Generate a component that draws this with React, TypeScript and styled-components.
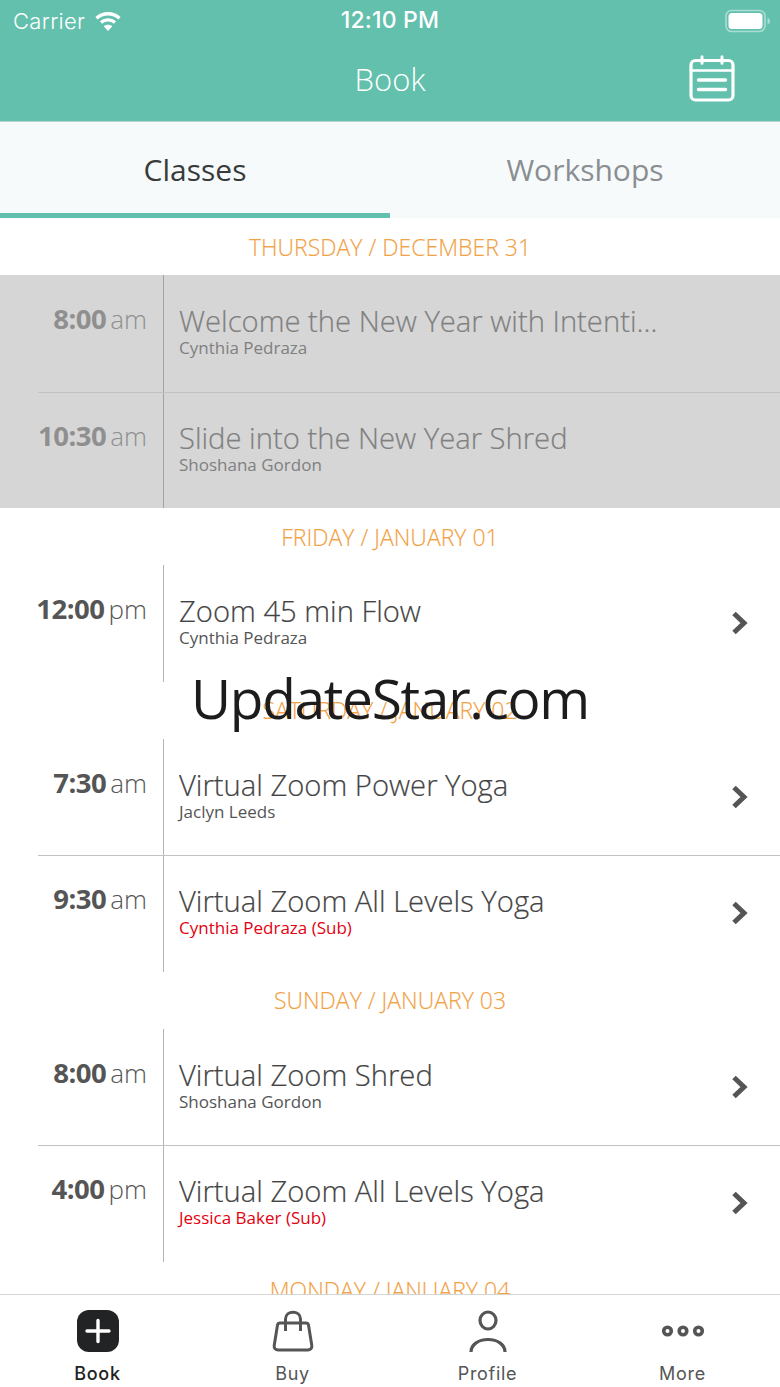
import React from 'react'
import styled, { createGlobalStyle } from 'styled-components'

const GlobalStyle = createGlobalStyle`
  html, body {
    margin: 0;
    padding: 0;
    background: #fff;
  }
  * {
    box-sizing: border-box;
  }
`

interface ClassItem {
  time: string
  period: string
  title: string
  teacher: string
  sub?: boolean
}
interface Section {
  heading: string
  past?: boolean
  items: ClassItem[]
}

const sections: Section[] = [
  {
    heading: 'THURSDAY / DECEMBER 31',
    past: true,
    items: [
      { time: '8:00', period: 'am', title: 'Welcome the New Year with Intentions and Flow', teacher: 'Cynthia Pedraza' },
      { time: '10:30', period: 'am', title: 'Slide into the New Year Shred', teacher: 'Shoshana Gordon' },
    ],
  },
  {
    heading: 'FRIDAY / JANUARY 01',
    items: [{ time: '12:00', period: 'pm', title: 'Zoom 45 min Flow', teacher: 'Cynthia Pedraza' }],
  },
  {
    heading: 'SATURDAY / JANUARY 02',
    items: [
      { time: '7:30', period: 'am', title: 'Virtual Zoom Power Yoga', teacher: 'Jaclyn Leeds' },
      { time: '9:30', period: 'am', title: 'Virtual Zoom All Levels Yoga', teacher: 'Cynthia Pedraza (Sub)', sub: true },
    ],
  },
  {
    heading: 'SUNDAY / JANUARY 03',
    items: [
      { time: '8:00', period: 'am', title: 'Virtual Zoom Shred', teacher: 'Shoshana Gordon' },
      { time: '4:00', period: 'pm', title: 'Virtual Zoom All Levels Yoga', teacher: 'Jessica Baker (Sub)', sub: true },
    ],
  },
  { heading: 'MONDAY / JANUARY 04', items: [] },
]

const WifiIcon = () => (
  <svg width="28" height="22" viewBox="0 0 28 22" fill="none" stroke="#fff" strokeWidth="3.4">
    <path d="M2.5 8.2C9 2.2 19 2.2 25.5 8.2" />
    <path d="M7 12.6c4-3.6 10-3.6 14 0" />
    <path d="M14 21l4.4-4.7c-2.5-2-6.3-2-8.8 0z" fill="#fff" stroke="none" />
  </svg>
)

const BatteryIcon = () => (
  <svg width="46" height="24" viewBox="0 0 46 24" fill="none">
    <rect x="1" y="1.5" width="39" height="21" rx="5.5" stroke="#fff" strokeOpacity="0.45" strokeWidth="1.6" />
    <rect x="3.5" y="4" width="34" height="16" rx="3.5" fill="#fff" />
    <path d="M42.5 8.5c1.5.5 2.5 2 2.5 3.5s-1 3-2.5 3.5z" fill="#fff" fillOpacity="0.45" />
  </svg>
)

const CalendarIcon = () => (
  <svg width="46" height="47" viewBox="0 0 46 47" fill="none" stroke="#fff" strokeLinecap="round">
    <rect x="2" y="5.5" width="42" height="39.5" rx="4.5" strokeWidth="3.2" />
    <path d="M2 15.5h42" strokeWidth="2.4" />
    <path d="M13 1.8v6.5M33 1.8v6.5" strokeWidth="3" />
    <path d="M9.5 25h27M9.5 34.5h27" strokeWidth="3.4" />
  </svg>
)

const ChevronIcon = () => (
  <svg width="18" height="24" viewBox="0 0 18 24" fill="none" stroke="#555" strokeWidth="5">
    <path d="M3 2.5l10 9.5-10 9.5" />
  </svg>
)

const BookIcon = () => (
  <svg width="42" height="42" viewBox="0 0 42 42">
    <rect width="42" height="42" rx="12" fill="#222325" />
    <path d="M21 10.5v21M10 21h22" stroke="#fff" strokeWidth="3.4" strokeLinecap="round" />
  </svg>
)

const BuyIcon = () => (
  <svg width="42" height="42" viewBox="0 0 42 42" fill="none" stroke="#555" strokeWidth="3">
    <path d="M8 13h26c1.5 0 2.2.8 2.5 2l3.3 20.5c.4 2.8-1.4 4.5-4 4.5H6.2c-2.6 0-4.4-1.7-4-4.5L5.5 15c.3-1.2 1-2 2.5-2z" />
    <path d="M13.5 21V9c0-9 15-9 15 0v12" />
  </svg>
)

const ProfileIcon = () => (
  <svg width="42" height="42" viewBox="0 0 42 42" fill="none" stroke="#555" strokeWidth="3.2">
    <ellipse cx="21" cy="10.5" rx="8" ry="8.5" />
    <path d="M4 42c0-7 7-12.5 17-12.5S38 35 38 42" />
  </svg>
)

const MoreIcon = () => (
  <svg width="44" height="14" viewBox="0 0 44 14" fill="none" stroke="#555" strokeWidth="3.6">
    <circle cx="6.5" cy="7" r="3.8" />
    <circle cx="22" cy="7" r="3.8" />
    <circle cx="37.5" cy="7" r="3.8" />
  </svg>
)

const App = () => {
  return (
    <Page>
      <GlobalStyle />
      <Header>
        <StatusBar>
          <Carrier>
            Carrier
            <WifiIcon />
          </Carrier>
          <Clock>12:10 PM</Clock>
          <Battery>
            <BatteryIcon />
          </Battery>
        </StatusBar>
        <NavBar>
          <NavTitle>Book</NavTitle>
          <CalendarButton>
            <CalendarIcon />
          </CalendarButton>
        </NavBar>
      </Header>
      <Tabs>
        <Tab $active>Classes</Tab>
        <Tab>Workshops</Tab>
      </Tabs>
      <Schedule>
        {sections.map((section) => (
          <div key={section.heading}>
            <DayHeading>{section.heading}</DayHeading>
            {section.items.map((item, index) => (
              <ClassRow key={item.time} $past={section.past}>
                <TimeCell $past={section.past}>
                  <b>{item.time}</b>
                  <span>{item.period}</span>
                </TimeCell>
                <Details $divided={index > 0}>
                  <ClassInfo>
                    <ClassTitle $past={section.past}>{item.title}</ClassTitle>
                    <Teacher $past={section.past} $sub={item.sub}>
                      {item.teacher}
                    </Teacher>
                  </ClassInfo>
                  {!section.past && (
                    <Chevron>
                      <ChevronIcon />
                    </Chevron>
                  )}
                </Details>
              </ClassRow>
            ))}
          </div>
        ))}
      </Schedule>
      <TabBar>
        <TabItem $active>
          <IconSlot>
            <BookIcon />
          </IconSlot>
          Book
        </TabItem>
        <TabItem>
          <IconSlot>
            <BuyIcon />
          </IconSlot>
          Buy
        </TabItem>
        <TabItem>
          <IconSlot>
            <ProfileIcon />
          </IconSlot>
          Profile
        </TabItem>
        <TabItem>
          <IconSlot>
            <MoreIcon />
          </IconSlot>
          More
        </TabItem>
      </TabBar>
      <Watermark>UpdateStar.com</Watermark>
    </Page>
  )
}

const Page = styled.div`
  position: relative;
  display: flex;
  flex-direction: column;
  width: 780px;
  height: 1387px;
  overflow: hidden;
  background: #fff;
  font-family: 'Open Sans', 'Liberation Sans', sans-serif;
`
const Header = styled.header`
  flex: none;
  height: 122px;
  background: #63c0ad;
  border-bottom: 1px solid #b9d4ce;
  color: #fff;
`
const StatusBar = styled.div`
  display: grid;
  grid-template-columns: 1fr auto 1fr;
  align-items: center;
  height: 40px;
  padding: 1px 9px 0 13px;
  font-family: 'Inter', 'Liberation Sans', sans-serif;
  font-size: 22px;
`
const Carrier = styled.div`
  display: flex;
  align-items: center;
  gap: 9px;
  font-weight: 300;
  letter-spacing: 0.3px;
`
const Clock = styled.div`
  margin: 0 4px 2px 0;
  font-size: 23px;
  font-weight: 500;
  letter-spacing: 0.2px;
`
const Battery = styled.div`
  display: flex;
  justify-content: flex-end;
`
const NavBar = styled.div`
  position: relative;
  display: flex;
  align-items: center;
  justify-content: center;
  height: 81px;
  padding-bottom: 4px;
`
const NavTitle = styled.div`
  font-size: 31px;
  font-weight: 300;
`
const CalendarButton = styled.div`
  position: absolute;
  right: 45px;
  top: 15px;
  display: flex;
`
const Tabs = styled.nav`
  flex: none;
  display: flex;
  height: 96px;
  background: #f6fafb;
`
const Tab = styled.div<{ $active?: boolean }>`
  flex: 1;
  display: flex;
  align-items: center;
  justify-content: center;
  padding-top: 4px;
  font-size: 30px;
  color: ${(props) => (props.$active ? '#3a3a3a' : '#8a8e92')};
  border-bottom: 5px solid ${(props) => (props.$active ? '#63c0ad' : 'transparent')};
`
const Schedule = styled.main`
  flex: 1;
  min-height: 0;
  overflow: hidden;
`
const DayHeading = styled.h2`
  display: flex;
  align-items: center;
  justify-content: center;
  height: 57px;
  margin: 0;
  font-size: 23px;
  font-weight: 300;
  -webkit-text-stroke: 0.15px currentColor;
  color: #f2a144;
`
const ClassRow = styled.div<{ $past?: boolean }>`
  display: flex;
  height: 116.5px;
  background: ${(props) => (props.$past ? '#d6d6d6' : '#fff')};
`
const TimeCell = styled.div<{ $past?: boolean }>`
  flex: none;
  display: flex;
  align-items: baseline;
  justify-content: flex-end;
  gap: 4px;
  width: 164px;
  padding: 25px 16px 0 0;
  border-right: 1px solid ${(props) => (props.$past ? '#a3a3a3' : '#b5b5b5')};
  color: ${(props) => (props.$past ? '#8f8f8f' : '#555')};
  font-size: 27.5px;
  b {
    font-weight: 700;
    letter-spacing: -0.5px;
  }
  span {
    font-weight: 300;
    font-size: 26px;
  }
`
const Details = styled.div<{ $divided?: boolean }>`
  flex: 1;
  min-width: 0;
  display: flex;
  align-items: flex-start;
  padding: 28px 31px 0 15px;
  position: relative;
  &::before {
    content: ${(props) => (props.$divided ? "''" : 'none')};
    position: absolute;
    top: 0;
    right: 0;
    left: -126px;
    border-top: 1px solid #c2c2c2;
  }
`
const ClassInfo = styled.div`
  flex: 1;
  min-width: 0;
`
const ClassTitle = styled.div<{ $past?: boolean }>`
  max-width: 486px;
  font-size: 29.2px;
  line-height: 36px;
  font-weight: 300;
  -webkit-text-stroke: 0.2px currentColor;
  white-space: nowrap;
  overflow: hidden;
  text-overflow: ellipsis;
  color: ${(props) => (props.$past ? '#808080' : '#444')};
`
const Teacher = styled.div<{ $past?: boolean; $sub?: boolean }>`
  font-size: 17px;
  line-height: 18px;
  color: ${(props) => (props.$sub ? '#e3000f' : props.$past ? '#808080' : '#555')};
`
const Chevron = styled.div`
  flex: none;
  display: flex;
  margin-top: 18px;
`
const TabBar = styled.footer`
  flex: none;
  display: grid;
  grid-template-columns: repeat(4, 1fr);
  height: 93px;
  background: #fff;
  border-top: 1px solid #d4d4d4;
`
const TabItem = styled.div<{ $active?: boolean }>`
  display: flex;
  flex-direction: column;
  align-items: center;
  padding-top: 15px;
  font-family: 'Inter', 'Liberation Sans', sans-serif;
  font-size: 18px;
  font-weight: ${(props) => (props.$active ? 500 : 400)};
  letter-spacing: 0.7px;
  line-height: 26px;
  color: ${(props) => (props.$active ? '#222' : '#555')};
`
const IconSlot = styled.div`
  display: flex;
  align-items: center;
  justify-content: center;
  height: 42px;
  margin-bottom: 9px;
`
const Watermark = styled.div`
  position: absolute;
  top: 660px;
  left: 0;
  width: 780px;
  text-align: center;
  font-size: 55px;
  line-height: 76px;
  letter-spacing: -1.3px;
  color: #1c1c1c;
`

export default App
